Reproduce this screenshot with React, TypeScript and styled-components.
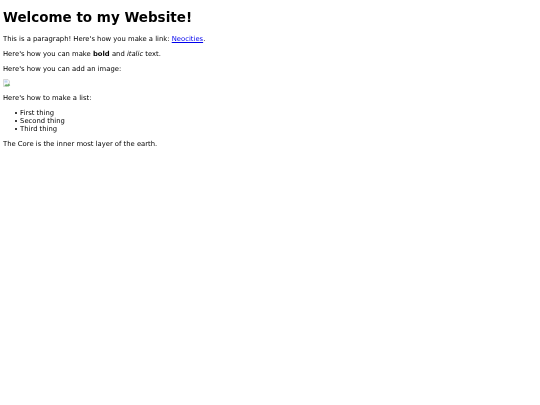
import React, { ReactElement } from 'react'
import styled, { createGlobalStyle } from 'styled-components'

const GlobalStyle = createGlobalStyle`
  html, body {
    margin: 0;
    background: #fff;
  }
  body {
    padding: 9px 3px 0;
    font-family: "DejaVu Sans", sans-serif;
    font-size: 6.82px;
    color: #000;
  }
  #root {
    filter: blur(0.2px);
  }
`

const Title = styled.h1`
  margin: 0 0 10.4px;
  font-size: 13.5px;
  line-height: 16px;
  font-weight: bold;
`

const Paragraph = styled.p`
  margin: 0 0 6.7px;
  line-height: 8px;
`

const Link = styled.a`
  color: #0000ee;
  text-decoration: underline;
`

const BrokenImage = styled.svg`
  display: block;
  width: 8px;
  height: 8px;
  margin: -0.7px 0 7.4px;
`

const List = styled.ul`
  margin: 0 0 6.7px;
  padding: 0 0 0 11.6px;
  line-height: 8px;
  list-style: none;
`

const Item = styled.li`
  display: flex;
  align-items: center;
  gap: 3.1px;

  &::before {
    content: "";
    width: 2.4px;
    height: 2.4px;
    border-radius: 50%;
    background: #000;
  }
`

function App(): ReactElement {
  return (
    <>
      <GlobalStyle />
      <Title>Welcome to my Website!</Title>
      <Paragraph>
        This is a paragraph! Here's how you make a link: <Link href="#">Neocities</Link>.
      </Paragraph>
      <Paragraph>
        Here's how you can make <strong>bold</strong> and <em>italic</em> text.
      </Paragraph>
      <Paragraph>Here's how you can add an image:</Paragraph>
      <Paragraph>
        <BrokenImage viewBox="0 0 8 8">
          <path d="M0.5 0.5H5L6.5 2V4L4 7.5H0.5Z" fill="#f4f6fa" stroke="#c2c2c2" strokeWidth="0.6" />
          <path d="M1.2 7L3 5L4.2 5.8L6 4.6L7.2 6.2L5.5 7.4Z" fill="#6fae6f" />
          <rect x="1.4" y="1.4" width="3" height="2.2" fill="#c2d6f4" />
        </BrokenImage>
      </Paragraph>
      <Paragraph>Here's how to make a list:</Paragraph>
      <List>
        <Item>First thing</Item>
        <Item>Second thing</Item>
        <Item>Third thing</Item>
      </List>
      <Paragraph>The Core is the inner most layer of the earth.</Paragraph>
    </>
  )
}

export default App
